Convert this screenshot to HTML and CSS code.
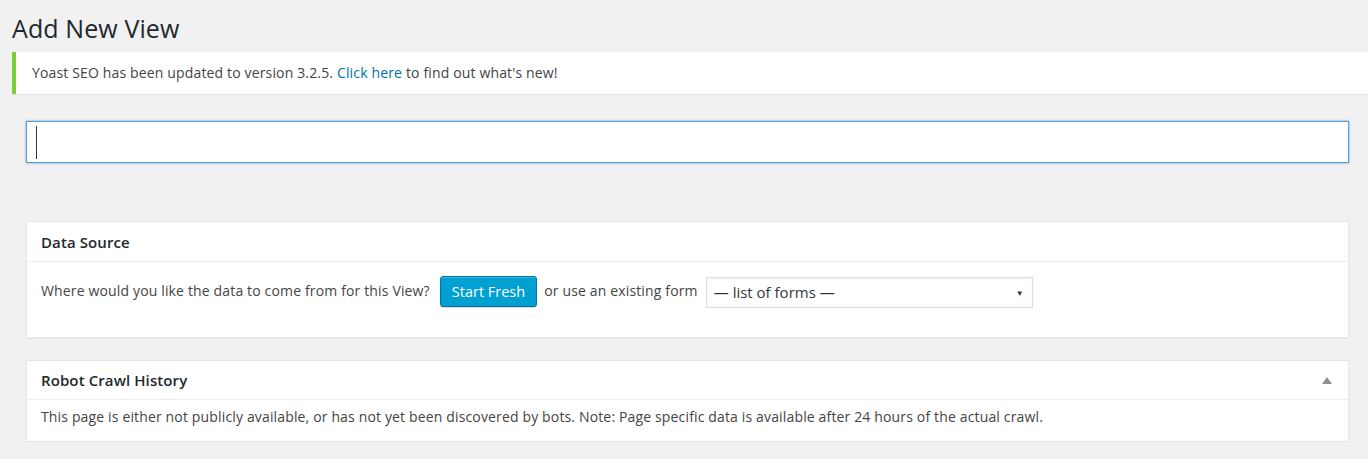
FILE: index.html
```html
<!DOCTYPE html>
<html>
<head>
<meta charset="utf-8">
<link rel="stylesheet" href="styles.css">
</head>
<body>
<div class="wrap">
  <h1 class="page-title">Add New View</h1>
  <div class="notice">Yoast SEO has been updated to version 3.2.5. <a href="#">Click here</a> to find out what's new!</div>
  <div class="post-body">
    <div class="title-input"><span class="caret"></span></div>
    <div class="postbox ds-box">
      <div class="postbox-head"><h2>Data Source</h2></div>
      <div class="postbox-inside ds-inside">
        <span class="ds-text">Where would you like the data to come from for this View?</span>
        <span class="btn-primary">Start Fresh</span>
        <span class="ds-text">or use an existing form</span>
        <span class="select"><span>— list of forms —</span><span class="select-arrow">▼</span></span>
      </div>
    </div>
    <div class="postbox crawl-box">
      <div class="postbox-head"><h2>Robot Crawl History</h2><span class="toggle"></span></div>
      <div class="postbox-inside crawl-inside">This page is either not publicly available, or has not yet been discovered by bots. Note: Page specific data is available after 24 hours of the actual crawl.</div>
    </div>
  </div>
</div>
</body>
</html>
```

FILE: styles.css
```css
html, body {
  margin: 0;
  padding: 0;
  background: #f1f1f1;
  font-family: "Open Sans", "Liberation Sans", sans-serif;
  color: #444;
  font-size: 14px;
  letter-spacing: 0.15px;
}
.wrap {
  padding: 8px 0 0 12px;
}
.page-title {
  margin: 0;
  font-size: 25px;
  font-weight: 400;
  letter-spacing: 0.1px;
  line-height: 40px;
  color: #23282d;
  height: 44px;
}
.notice {
  background: #fff;
  border-left: 4px solid #7ad03a;
  box-shadow: 0 1px 1px rgba(0,0,0,0.06);
  padding: 11px 16px;
  line-height: 20px;
  color: #444;
}
.notice a {
  color: #0073aa;
  text-decoration: none;
}
.post-body {
  margin: 27px 19px 0 14px;
}
.title-input {
  height: 40px;
  background: #fff;
  border: 1px solid #5b9dd9;
  box-shadow: 0 0 2px rgba(30,140,190,0.8);
  display: flex;
  align-items: center;
  padding-left: 9px;
}
.caret {
  display: block;
  width: 1px;
  height: 33px;
  background: #32373c;
}
.postbox {
  background: #fff;
  border: 1px solid #e5e5e5;
  box-shadow: 0 1px 1px rgba(0,0,0,0.04);
}
.ds-box {
  margin-top: 58px;
}
.crawl-box {
  margin-top: 22px;
}
.postbox-head {
  height: 39px;
  border-bottom: 1px solid #eee;
  display: flex;
  align-items: center;
  justify-content: space-between;
  padding: 0 16px 0 14px;
}
.crawl-box .postbox-head {
  height: 38px;
}
.postbox-head h2 {
  margin: 0;
  font-size: 15px;
  font-weight: 600;
  letter-spacing: 0.1px;
  color: #23282d;
  line-height: 20px;
}
.toggle {
  width: 0;
  height: 0;
  border-left: 5px solid transparent;
  border-right: 5px solid transparent;
  border-bottom: 7px solid #8c8f94;
}
.ds-inside {
  padding: 13px 14px 30px;
  display: flex;
  align-items: center;
  height: 32px;
}
.ds-text {
  line-height: 20px;
  color: #444;
}
.btn-primary {
  margin: 0 7px 0 10px;
  height: 29px;
  line-height: 29px;
  padding: 0 11px;
  background: #00a0d2;
  border: 1px solid #0073aa;
  border-radius: 3px;
  color: #fff;
  font-size: 14.5px;
  letter-spacing: 0;
  box-shadow: inset 0 1px 0 rgba(120,200,230,0.5), 0 1px 0 rgba(0,0,0,0.15);
}
.select {
  margin-left: 8px;
  border: 1px solid #ddd;
  box-shadow: inset 0 1px 2px rgba(0,0,0,0.07);
  display: flex;
  align-items: center;
  justify-content: space-between;
  padding: 0 8px 0 7px;
  box-sizing: border-box;
  width: 327px;
  height: 31px;
  margin-top: 2px;
  font-size: 15px;
  letter-spacing: 0;
  color: #32373c;
}
.select-arrow {
  font-size: 8px;
  color: #32373c;
}
.crawl-inside {
  padding: 0 14px;
  height: 41px;
  line-height: 33px;
  color: #444;
}
```
